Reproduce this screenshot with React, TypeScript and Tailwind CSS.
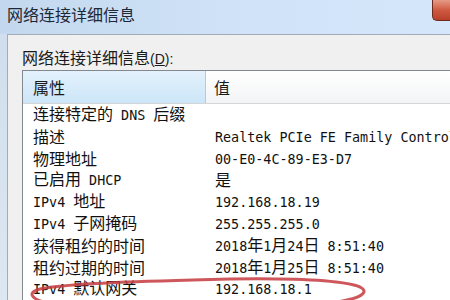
import React from "react";

const CJK = /([\u3000-\u9fff\uff00-\uffef]+)/;

function Mixed({ text }: { text: string }) {
  const parts = text.split(CJK).filter((p) => p.length > 0);
  return (
    <span className="whitespace-pre">
      {parts.map((p, i) =>
        CJK.test(p) ? (
          <span key={i} className="font-['Noto_Sans_CJK_SC',sans-serif] text-[16px]">
            {p}
          </span>
        ) : (
          <span key={i} className="font-['DejaVu_Sans_Mono',monospace] text-[13.4px]">
            {p}
          </span>
        )
      )}
    </span>
  );
}

const rows: [string, string][] = [
  ["连接特定的 DNS 后缀", ""],
  ["描述", "Realtek PCIe FE Family Controller"],
  ["物理地址", "00-E0-4C-89-E3-D7"],
  ["已启用 DHCP", "是"],
  ["IPv4 地址", "192.168.18.19"],
  ["IPv4 子网掩码", "255.255.255.0"],
  ["获得租约的时间", "2018年1月24日 8:51:40"],
  ["租约过期的时间", "2018年1月25日 8:51:40"],
  ["IPv4 默认网关", "192.168.18.1"],
];

export default function App() {
  return (
    <div className="relative w-[450px] h-[300px] overflow-hidden bg-[#d3e2f1] font-['Noto_Sans_CJK_SC',sans-serif]">
      {/* Title bar */}
      <div className="relative h-[34px] bg-gradient-to-r from-[#c3d8ee] via-[#cfe2f7] to-[#d4e7fb] flex items-start">
        <div className="pl-[7px] pt-[3px] text-[16px] leading-[22px] text-[#1c2838]">网络连接详细信息</div>
        <div className="absolute right-0 top-0 w-[18px] h-[21px] rounded-bl-[5px] border border-r-0 border-t-0 border-[#6e2a1f] bg-gradient-to-b from-[#e59a86] via-[#cf5a40] to-[#b8402a]" />
      </div>
      {/* Body */}
      <div className="flex h-[266px]">
        <div className="w-[7px] shrink-0 bg-gradient-to-b from-[#d0deed] to-[#dde7f1]" />
        <div className="flex-1 min-w-0 border-l border-t border-[#a3acb6] bg-[#f0f0f0] pl-[14px] pt-[11px] flex flex-col">
          <div className="h-[24px] text-[16px] leading-[22px] text-[#1a1a1a] whitespace-pre">
            网络连接详细信息<span className="font-['Liberation_Sans',sans-serif] text-[14px]">(<span className="underline">D</span>):</span>
          </div>
          <div className="flex-1 min-w-0 border-l border-t border-[#828790] bg-white flex flex-col">
            {/* Header */}
            <div className="flex h-[33px] border-b border-[#d5d5d5]">
              <div className="w-[183px] shrink-0 bg-gradient-to-b from-[#e3f1fc] to-[#cde6f8] border-r border-[#a9cde9] flex items-center pl-[10px] text-[16px] text-[#1a1a1a]">
                属性
              </div>
              <div className="flex-1 min-w-0 bg-gradient-to-b from-[#ffffff] to-[#f3f4f6] flex items-center pl-[8px] text-[16px] text-[#1a1a1a]">
                值
              </div>
            </div>
            {/* Rows */}
            <div className="flex flex-col">
              {rows.map(([k, v], i) => (
                <div key={i} className="flex h-[21.8px] items-center leading-[21.8px] text-[#111]">
                  <div className="w-[184px] shrink-0 pl-[10px]">
                    <Mixed text={k} />
                  </div>
                  <div className="flex-1 min-w-0 pl-[8px]">
                    <Mixed text={v} />
                  </div>
                </div>
              ))}
            </div>
          </div>
        </div>
      </div>
      {/* Red hand-drawn ellipse */}
      <svg className="absolute inset-0 pointer-events-none" width="450" height="300" viewBox="0 0 450 300">
        <path
          d="M 48 303 C 30 299, 27 292, 40 289 C 70 283, 150 281, 230 279 C 300 278, 345 281, 360 287 C 370 292, 362 299, 330 303"
          fill="none"
          stroke="#c43a3e"
          strokeWidth="3"
          strokeLinecap="round"
          opacity="0.85"
        />
      </svg>
    </div>
  );
}
